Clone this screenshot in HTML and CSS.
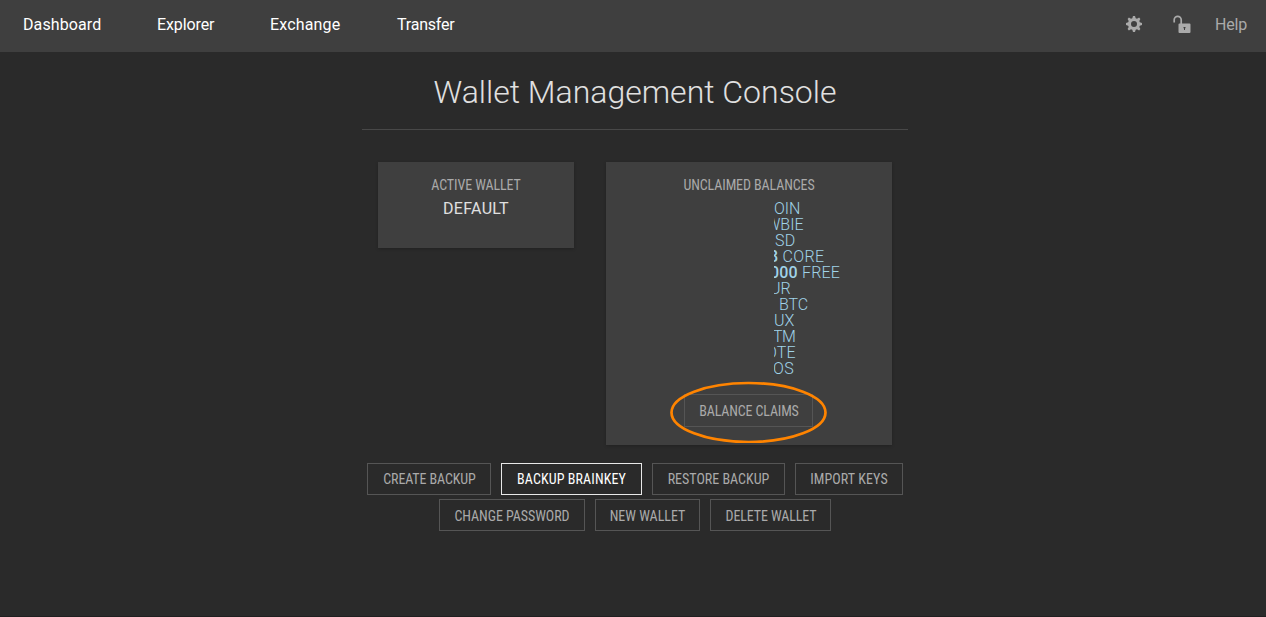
FILE: index.html
```html
<!DOCTYPE html>
<html lang="en">
<head>
<meta charset="utf-8">
<title>Wallet Management Console</title>
<link rel="stylesheet" href="styles.css">
</head>
<body>
<header class="topbar">
  <nav class="nav">
    <a class="dashboard">Dashboard</a><a class="explorer">Explorer</a><a class="exchange">Exchange</a><a class="transfer">Transfer</a>
  </nav>
  <div class="tools">
    <svg class="gear" width="16" height="16" viewBox="0 0 16 16"><path fill="currentColor" fill-rule="evenodd" d="M7 0h2l.7 2.200 1.300.5 2.100-1.100 1.300 1.300-1.100 2.100.5 1.300L16 7v2l-2.200.7-.5 1.300 1.100 2.100-1.300 1.300-2.100-1.100-1.300.5L9 16H7l-.7-2.200-1.300-.5-2.100 1.100-1.300-1.300 1.100-2.100-.5-1.300L0 9V7l2.200-.7.5-1.300-1.100-2.100 1.300-1.300 2.100 1.100 1.300-.5zM8 5a3 3 0 1 0 0 6 3 3 0 0 0 0-6z"/></svg>
    <svg class="lock" width="18" height="18" viewBox="0 0 18 18"><path d="M1.200 7.500V4.800a3.500 3.500 0 0 1 7 0V9" fill="none" stroke="currentColor" stroke-width="1.700"/><path fill="currentColor" fill-rule="evenodd" d="M6.500 8.500h10a1 1 0 0 1 1 1V17a1 1 0 0 1-1 1h-10a1 1 0 0 1-1-1V9.500a1 1 0 0 1 1-1zM10.500 12v1.200h.5v1.800h1v-1.800h.5v-1.200z"/></svg>
    <a class="help">Help</a>
  </div>
</header>
<main class="console">
  <h1>Wallet Management Console</h1>
  <div class="cards">
    <section class="card active-wallet">
      <h2>ACTIVE WALLET</h2>
      <p class="wallet-name">DEFAULT</p>
    </section>
    <section class="card unclaimed">
      <h2>UNCLAIMED BALANCES</h2>
      <ul class="balances">
        <li>OIN</li>
        <li class="newbie">WBIE</li>
        <li class="usd">SD</li>
        <li class="core"><b>8</b> CORE</li>
        <li class="free"><b>000</b> FREE</li>
        <li class="eur">UR</li>
        <li class="btc">BTC</li>
        <li>UX</li>
        <li class="tm">TM</li>
        <li class="note">OTE</li>
        <li class="eos">OS</li>
      </ul>
      <div class="claims">
        <button class="btn b-claims">BALANCE CLAIMS</button>
        <svg class="highlight" width="158" height="62" viewBox="0 0 158 62"><ellipse cx="78.500" cy="31.500" rx="77" ry="29.500"/></svg>
      </div>
    </section>
  </div>
  <div class="actions">
    <button class="btn b-create">CREATE BACKUP</button>
    <button class="btn selected b-brain">BACKUP BRAINKEY</button>
    <button class="btn b-restore">RESTORE BACKUP</button>
    <button class="btn b-import">IMPORT KEYS</button>
  </div>
  <div class="actions">
    <button class="btn b-change">CHANGE PASSWORD</button>
    <button class="btn b-new">NEW WALLET</button>
    <button class="btn b-delete">DELETE WALLET</button>
  </div>
</main>
</body>
</html>
```
FILE: styles.css
```css
* { box-sizing: border-box; }
body {
  margin: 0;
  height: 617px;
  overflow: hidden;
  background: #2a2a2a;
  border-bottom: 1px solid #201f20;
  font-family: Roboto, sans-serif;
  color: #e0e0e0;
}
.topbar {
  height: 52px;
  background: #3f3f3f;
  display: flex;
  justify-content: space-between;
  padding: 0 19px 0 23px;
  font-size: 16px;
  line-height: 49px;
}
.nav { display: flex; color: #fff; white-space: nowrap; }
.dashboard { width: 134px; letter-spacing: .1px; }
.explorer { width: 113px; letter-spacing: -.1px; }
.exchange { width: 127px; letter-spacing: .15px; }
.transfer { letter-spacing: -.2px; }
.tools { display: flex; color: #aaa; }
.gear { margin: 16px 31px 0 0; }
.lock { margin: 15px 24px 0 0; }
.help { width: 32px; letter-spacing: -.2px; }
.console { width: 546px; margin-left: 362px; }
h1 {
  margin: 0;
  height: 78px;
  border-bottom: 1px solid #484848;
  text-align: center;
  font-size: 32px;
  font-weight: 300;
  line-height: 80px;
  white-space: nowrap;
}
.cards { display: flex; align-items: flex-start; gap: 32px; padding: 32px 16px 0; }
.card { background: #3f3f3f; box-shadow: 0 1px 3px rgba(0, 0, 0, .2); }
.active-wallet { width: 196px; height: 86px; }
.unclaimed { width: 286px; height: 283px; }
h2 {
  margin: 14px 0 0;
  font-size: 14px;
  line-height: 18px;
  font-weight: 400;
  font-stretch: 75%;
  text-align: center;
  color: #aaa;
  letter-spacing: -.1px;
  white-space: nowrap;
}
.wallet-name { margin: 4px 0 0; text-align: center; font-size: 16px; line-height: 22px; letter-spacing: .3px; }
.balances {
  list-style: none;
  margin: 7px 0 0 168px;
  padding: 0;
  overflow: hidden;
  color: #a0d3e8;
  font-size: 16px;
  font-weight: 300;
  line-height: 16px;
}
.balances b { font-weight: 500; }
.newbie { text-indent: -8px; }
.usd { text-indent: 1px; letter-spacing: .3px; }
.core { text-indent: -5px; letter-spacing: .3px; }
.free { text-indent: -4px; letter-spacing: .2px; }
.eur { text-indent: -4px; }
.btc { text-indent: 5px; letter-spacing: -.1px; }
.tm { text-indent: -1px; letter-spacing: -.5px; }
.note { text-indent: -8px; letter-spacing: .2px; }
.eos { text-indent: -1px; letter-spacing: .3px; }
.claims { position: relative; display: flex; margin: 17px 0 0 78px; }
.highlight { position: absolute; left: -14px; top: -13px; fill: none; stroke: #ff8400; stroke-width: 2.7px; }
.btn {
  height: 32px;
  padding: 0;
  background: transparent;
  border: 1px solid #555;
  color: #aaa;
  font: inherit;
  font-size: 14px;
  font-stretch: 75%;
  white-space: nowrap;
}
.selected { border-color: #e8e8e8; color: #fff; }
.actions { display: flex; justify-content: center; gap: 10px; margin-top: 18px; }
.actions + .actions { margin-top: 4px; }
.actions + .actions .btn { padding-top: 2px; }
.b-claims { width: 129px; height: 33px; padding-left: 1px; letter-spacing: -.15px; }
.b-create { width: 124px; padding-left: 1px; letter-spacing: -.1px; }
.b-brain { width: 141px; letter-spacing: .1px; }
.b-restore { width: 133px; }
.b-import { width: 108px; letter-spacing: .1px; }
.b-change { width: 146px; letter-spacing: -.05px; }
.b-new { width: 105px; }
.b-delete { width: 121px; padding-left: 1px; letter-spacing: -.1px; }
```
